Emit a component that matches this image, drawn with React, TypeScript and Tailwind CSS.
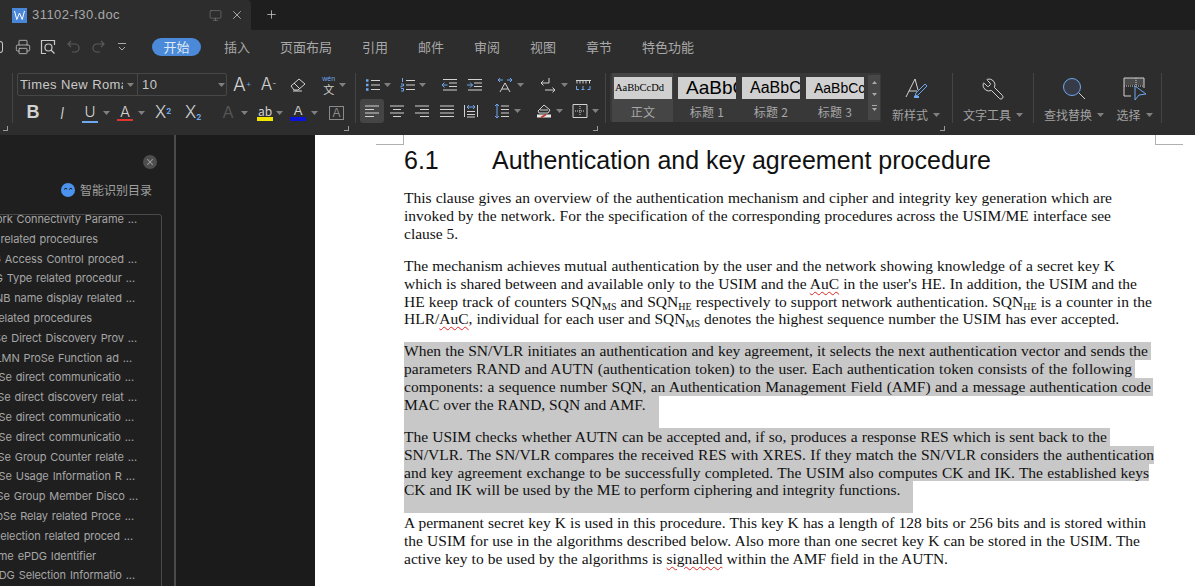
import React from 'react';
import { Monitor, Plus, Printer, Wrench, X } from 'lucide-react';

const cjk = '[font-family:"Noto_Sans_CJK_SC","Noto_Sans",sans-serif]';
const serif = '[font-family:"Liberation_Serif",serif]';
const sans = '[font-family:"Liberation_Sans",sans-serif]';
const thin = '[font-family:Inter,sans-serif] font-light';

type IconProps = { className?: string };

const Caret = ({ className = '' }: IconProps) => (
  <svg width="7" height="4" viewBox="0 0 7 4" className={`shrink-0 ${className}`}>
    <path d="M0 0h7L3.5 4z" fill="#808080" />
  </svg>
);

const Svg = ({ className = '', children }: IconProps & { children: React.ReactNode }) => (
  <svg width="16" height="16" viewBox="0 0 16 16" fill="none" stroke="#d2d2d2" strokeWidth="1" className={`shrink-0 ${className}`}>
    {children}
  </svg>
);

const Bullets = ({ className }: IconProps) => (
  <Svg className={className}>
    <path d="M6 3.5h9M6 8h9M6 12.5h9" />
    <path d="M1 3.5h2.5M1 8h2.5M1 12.5h2.5" stroke="#6ea8ee" strokeWidth="2.5" />
  </Svg>
);
const Numbers = ({ className }: IconProps) => (
  <Svg className={className}>
    <path d="M6 3.5h9M6 8h9M6 12.5h9" />
    <path d="M2.500 1v4M1 7h2.500v2H1v1.500M1 11.500h2.500v2.500H1" stroke="#6ea8ee" />
  </Svg>
);
const Outdent = ({ className }: IconProps) => (
  <Svg className={className}>
    <path d="M2 2.500h14M8 6h8M8 9.500h8M2 13h14" />
    <path d="M6.500 8H1M3.500 5.500 1 8l2.500 2.500" stroke="#6ea8ee" />
  </Svg>
);
const Indent = ({ className }: IconProps) => (
  <Svg className={className}>
    <path d="M2 2.500h14M8 6h8M8 9.500h8M2 13h14" />
    <path d="M1 8h5.500M4 5.500 6.500 8 4 10.500" stroke="#6ea8ee" />
  </Svg>
);
const AsianLayout = ({ className }: IconProps) => (
  <Svg className={className}>
    <path d="M3 15 8 6l5 9M5 12h6" />
    <path d="M1 3h5M3 1 1 3l2 2M15 3h-5M13 1l2 2-2 2" stroke="#6ea8ee" />
  </Svg>
);
const ReturnMark = ({ className }: IconProps) => (
  <Svg className={className}>
    <path d="M9 1v5H1M3.500 3.500 1 6l2.500 2.500M5 13h10M12.500 10.500 15 13l-2.500 2.500" />
  </Svg>
);
const Ruler = ({ className }: IconProps) => (
  <Svg className={className}>
    <path d="M1 3.500h15M2 3.500v3M5 3.500v3M8 3.500v3M11 3.500v3M14.500 3.500v3" />
    <path d="M1.500 9v3.500h2.500M15 9v3.500h-2.500M8 9v3.500M6.500 12.500h3" stroke="#6ea8ee" />
  </Svg>
);
const Align = ({ d, className }: IconProps & { d: string }) => (
  <Svg className={className}>
    <path d={d} />
  </Svg>
);
const Distribute = ({ className }: IconProps) => (
  <Svg className={className}>
    <path d="M1.500 2v12M14.500 2v12M4 8.500h8M4 11.500h8M4 14h8" />
    <path d="M4 4h8M6 2 4 4l2 2M10 2l2 2-2 2" stroke="#6ea8ee" />
  </Svg>
);
const LineSpacing = ({ className }: IconProps) => (
  <Svg className={className}>
    <path d="M7 3h8M7 6.500h8M7 10h8M7 13.500h8" />
    <path d="M3 1v14M1 3l2-2 2 2M1 13l2 2 2-2" stroke="#6ea8ee" />
  </Svg>
);
const FillBucket = ({ className }: IconProps) => (
  <Svg className={className}>
    <path d="M2 8 8 2l6 5-2 3H3z" />
    <path d="M4 7h8" />
    <path d="M1 11.500h14v3H1z" fill="#e8e8e8" stroke="none" />
    <path d="M5 14.500 10 11.500" stroke="#c8322e" strokeWidth="1.500" />
  </Svg>
);
const Borders = ({ className }: IconProps) => (
  <Svg className={className}>
    <path d="M1 1.500h14v13H1z" />
    <path d="M8 3v10M3 8h10" strokeDasharray="1 1" />
  </Svg>
);

const Sep = () => <div className="w-px h-[50px] bg-[#454545] shrink-0" />;

const Launcher = ({ className = '' }: IconProps) => (
  <div className={`absolute top-[60px] w-[5px] h-[5px] border-r border-b border-[#9a9a9a] ${className}`} />
);

const BigTool = ({ w, label, icon }: { w: string; label: string; icon: React.ReactNode }) => (
  <div className={`flex flex-col items-center shrink-0 pt-[10px] ${w}`}>
    <div className="h-[26px] w-[26px] flex items-center justify-center">{icon}</div>
    <div className={`mt-[4px] flex items-center gap-[5px] text-[12px] leading-[18px] text-[#a2a2a2] ${cjk}`}>
      {label}
      <Caret />
    </div>
  </div>
);

const menuItems = ['插入', '页面布局', '引用', '邮件', '审阅', '视图', '章节', '特色功能'];

const styles = [
  { sample: 'AaBbCcDd', cls: `text-[10.5px] pl-[1px] ${serif}`, label: '正文', box: 'ml-[2px] w-[61px] pl-[2px] pr-[1px] bg-[#454545]' },
  { sample: 'AaBbC', cls: `text-[19px] pl-[8px] ${sans}`, label: '标题 1', box: 'ml-[5px] w-[58px]' },
  { sample: 'AaBbC', cls: `text-[16px] pl-[8px] ${sans}`, label: '标题 2', box: 'ml-[6px] w-[58px]' },
  { sample: 'AaBbCc', cls: `text-[14px] pl-[8px] ${sans}`, label: '标题 3', box: 'ml-[6px] w-[58px]' },
];

const outline = [
  { text: 'Network Connectivity Parame ...', m: 'mr-[24px]' },
  { text: 'Network related procedures', m: 'mr-[63px]' },
  { text: 'ePDG Access Control proced ...', m: 'mr-[24px]' },
  { text: 'ePDG Type related procedur ...', m: 'mr-[26px]' },
  { text: 'eNB name display related  ...', m: 'mr-[26px]' },
  { text: 'Network related procedures', m: 'mr-[69px]' },
  { text: 'ProSe Direct Discovery Prov ...', m: 'mr-[24px]' },
  { text: 'HPLMN ProSe Function ad ...', m: 'mr-[29px]' },
  { text: 'ProSe direct communicatio ...', m: 'mr-[27px]' },
  { text: 'ProSe direct discovery relat ...', m: 'mr-[24px]' },
  { text: 'ProSe direct communicatio ...', m: 'mr-[27px]' },
  { text: 'ProSe direct communicatio ...', m: 'mr-[27px]' },
  { text: 'ProSe Group Counter relate ...', m: 'mr-[24px]' },
  { text: 'ProSe Usage Information R ...', m: 'mr-[26px]' },
  { text: 'ProSe Group Member Disco ...', m: 'mr-[23px]' },
  { text: 'ProSe Relay related Proce ...', m: 'mr-[27px]' },
  { text: 'ePDG Selection related proced ...', m: 'mr-[28px]' },
  { text: 'Home ePDG Identifier', m: 'mr-[65px]' },
  { text: 'ePDG Selection Informatio ...', m: 'mr-[26px]' },
];

const Line = ({ w, h = 'h-[18px]', bg = '', children }: { w?: string; h?: string; bg?: string; children: React.ReactNode }) => (
  <div className={`${h} ${bg}`}>
    <div className={`${w ?? ''} ${w ? 'text-justify [text-align-last:justify]' : ''} leading-[18px]`}>{children}</div>
  </div>
);

const Sub = ({ children }: { children: React.ReactNode }) => <sub className="text-[10px]">{children}</sub>;
const Wavy = ({ children }: { children: React.ReactNode }) => (
  <span className="underline decoration-wavy decoration-[#e02424] decoration-1 underline-offset-2">{children}</span>
);

export default function App() {
  return (
    <div className="w-[1195px] h-[586px] overflow-hidden flex flex-col bg-[#1d1d1d]">
      {/* tab strip */}
      <div className="h-[30px] flex shrink-0 bg-[#1e1e1e]">
        <div className="w-[251px] flex items-center bg-[#2d2d2d] rounded-tr-[4px] pl-[12px]">
          <div className="w-[15px] h-[15px] bg-[#4a86d8] flex items-center justify-center">
            <svg width="11" height="9" viewBox="0 0 11 9" fill="none" stroke="#fff" strokeWidth="1">
              <path d="M.5 0 2.800 8.500 5.500 2l2.700 6.500L10.500 0" />
            </svg>
          </div>
          <span className={`ml-[5px] text-[13px] tracking-[0.45px] text-[#a8a8a8] ${sans}`}>31102-f30.doc</span>
          <Monitor size={13} strokeWidth={1} className="ml-[89px] text-[#8a8a8a]" />
          <X size={14} strokeWidth={1.200} className="ml-[8px] text-[#dcdcdc]" />
        </div>
        <Plus size={13} strokeWidth={1.500} className="ml-[14px] mt-[8px] text-[#c4c4c4]" />
      </div>

      {/* menu row */}
      <div className="h-[36px] pb-[2px] flex items-center shrink-0 bg-[#2d2d2d]">
        <div className="w-[3px] h-[12px] border border-l-0 border-[#c8c8c8] rounded-r-full" />
        <Printer size={16} strokeWidth={1.200} className="ml-[12px] text-[#c8c8c8]" />
        <svg width="16" height="16" viewBox="0 0 16 16" fill="none" stroke="#c8c8c8" strokeWidth="1.200" className="ml-[9px]">
          <path d="M6 14.500H1.500v-13h13V6" />
          <circle cx="8.500" cy="8.500" r="3.500" />
          <path d="m11 11 3.500 3.500" />
        </svg>
        <svg width="14" height="14" viewBox="0 0 14 14" fill="none" stroke="#5a5a5a" strokeWidth="1.200" className="ml-[11px]">
          <path d="M4 1 1 4l3 3M1 4h7a4 4 0 0 1 0 8H5" />
        </svg>
        <svg width="14" height="14" viewBox="0 0 14 14" fill="none" stroke="#5a5a5a" strokeWidth="1.200" className="ml-[10px]">
          <path d="m10 1 3 3-3 3M13 4H6a4 4 0 0 0 0 8h3" />
        </svg>
        <svg width="8" height="9" viewBox="0 0 8 9" fill="none" stroke="#a8a8a8" className="ml-[13px]">
          <path d="M0 .500h8M1 4l3 3 3-3" />
        </svg>
        <div className={`ml-[26px] w-[49px] h-[18px] rounded-full bg-[#4a8ad8] text-center text-[13px] leading-[18px] text-[#dfe9f7] ${cjk}`}>开始</div>
        <div className={`ml-[23px] flex gap-[30px] text-[13px] text-[#a8a8a8] ${cjk}`}>
          {menuItems.map((m) => (
            <span key={m}>{m}</span>
          ))}
        </div>
      </div>

      {/* ribbon */}
      <div className="relative h-[69px] flex shrink-0 items-start pt-[7px] bg-[#2d2d2d]">
        <div className="ml-[12px]"><Sep /></div>
        <div className="w-[342px] shrink-0 pl-[4px]">
          <div className="flex items-center h-[23px]">
            <div className={`flex items-center w-[210px] h-[23px] border border-[#474747] rounded-[2px] text-[13px] text-[#c8c8c8] ${sans}`}>
              <div className="w-[120px] h-full flex items-center border-r border-[#474747] pl-[2px]">
                <span className="w-[103px] overflow-hidden whitespace-nowrap tracking-[0.4px]">Times New Roman</span>
                <Caret className="ml-[4px]" />
              </div>
              <span className="pl-[4px] w-[80px] tracking-[0.5px]">10</span>
              <Caret />
            </div>
            <span className={`ml-[6px] text-[19px] leading-[23px] text-[#d2d2d2] ${thin}`}>A<sup className="text-[9px] text-[#6ea8ee]">+</sup></span>
            <span className={`ml-[9px] text-[17px] leading-[23px] text-[#d2d2d2] ${thin}`}>A<sup className="text-[9px] text-[#d2d2d2]">-</sup></span>
            <svg width="16" height="14" viewBox="0 0 16 14" fill="none" stroke="#d2d2d2" className="ml-[14px] shrink-0">
              <path d="M1 8 9 1l6 5-7 6H4zM4 5l6 6M3 13h9" />
            </svg>
            <div className={`ml-[15px] flex flex-col items-center w-[15px] ${cjk}`}>
              <span className={`text-[7px] h-[8px] leading-[8px] text-[#6ea8ee] ${sans}`}>wén</span>
              <span className="text-[11px] h-[12px] leading-[12px] text-[#d2d2d2]">文</span>
            </div>
            <Caret className="ml-[3px]" />
          </div>
          <div className={`flex items-center h-[27px] mt-[3px] text-[#d2d2d2] ${sans}`}>
            <span className="ml-[9px] w-[14px] text-[18px] font-bold text-center">B</span>
            <span className={`ml-[18px] w-[8px] text-[16px] italic text-center ${thin}`}>I</span>
            <span className={`ml-[16px] w-[16px] text-[15px] text-center leading-[18px] border-b-2 border-[#6ea8ee] ${thin}`}>U</span>
            <Caret className="ml-[5px]" />
            <span className={`ml-[7px] w-[16px] text-[15px] text-center leading-[14px] border-b-2 border-[#e0352e] ${thin}`}>A</span>
            <Caret className="ml-[5px]" />
            <span className={`ml-[10px] w-[17px] text-[17px] ${thin}`}>X<sup className="text-[8px] text-[#6ea8ee] font-bold">2</sup></span>
            <span className={`ml-[13px] w-[17px] text-[17px] ${thin}`}>X<sub className="text-[8px] text-[#6ea8ee] font-bold">2</sub></span>
            <span className="ml-[18px] w-[16px] text-[16px] text-center text-[#555]">A</span>
            <Caret className="ml-[5px]" />
            <span className={`ml-[9px] w-[16px] text-[12px] text-center leading-[13px] border-b-[4px] border-[#f2e600] ${cjk}`}>ab</span>
            <Caret className="ml-[3px]" />
            <span className="ml-[7px] w-[16px] text-[13px] text-center leading-[13px] border-b-[4px] border-[#0b14d8]">A</span>
            <Caret className="ml-[5px]" />
            <span className="ml-[11px] w-[15px] h-[14px] border border-[#8a8a8a] text-[12px] leading-[12px] text-center text-[#8a8a8a]">A</span>
          </div>
        </div>
        <Sep />
        <div className="w-[249px] shrink-0 pl-[4px]">
          <div className="flex items-center h-[23px]">
            <Bullets className="ml-[5px]" />
            <Caret className="ml-[3px]" />
            <Numbers className="ml-[9px]" />
            <Caret className="ml-[3px]" />
            <Outdent className="ml-[15px]" />
            <Indent className="ml-[9px]" />
            <AsianLayout className="ml-[15px]" />
            <Caret className="ml-[4px]" />
            <ReturnMark className="ml-[16px]" />
            <Caret className="ml-[5px]" />
            <Ruler className="ml-[7px]" />
          </div>
          <div className="flex items-center h-[24px] mt-[3px]">
            <div className="w-[24px] h-[24px] rounded-[3px] bg-[#454545] flex items-center justify-center">
              <Align d="M1 3h14M1 6.500h9M1 10h14M1 13.500h9" />
            </div>
            <Align className="ml-[5px]" d="M1 3h14M4 6.500h8M1 10h14M4 13.500h8" />
            <Align className="ml-[9px]" d="M1 3h14M6 6.500h9M1 10h14M6 13.500h9" />
            <Align className="ml-[9px]" d="M1 3h14M1 6.500h14M1 10h14M1 13.500h14" />
            <Distribute className="ml-[8px]" />
            <LineSpacing className="ml-[15px]" />
            <Caret className="ml-[4px]" />
            <FillBucket className="ml-[15px]" />
            <Caret className="ml-[4px]" />
            <Borders className="ml-[9px]" />
            <Caret className="ml-[4px]" />
          </div>
        </div>
        <Sep />
        <div className="ml-[4px] w-[271px] h-[49px] shrink-0 flex rounded-[2px] bg-[#383838]">
          {styles.map((s) => (
            <div key={s.label} className={`shrink-0 pt-[4px] ${s.box}`}>
              <div className={`h-[22px] overflow-hidden whitespace-nowrap bg-[#d0d0d0] text-black leading-[22px] ${s.cls}`}>{s.sample}</div>
              <div className={`mt-[4px] text-center text-[12px] leading-[18px] text-[#a8a8a8] tracking-[0.3px] ${cjk}`}>{s.label}</div>
            </div>
          ))}
          <div className="ml-[4px] w-[12px] flex flex-col items-center bg-[#474747] my-[2px] pt-[6px] gap-[9px]">
            <svg width="5" height="3" viewBox="0 0 5 3"><path d="M0 3h5L2.500 0z" fill="#aaa" /></svg>
            <svg width="5" height="3" viewBox="0 0 5 3"><path d="M0 0h5L2.500 3z" fill="#aaa" /></svg>
            <svg width="5" height="6" viewBox="0 0 5 6"><path d="M0 0h5v1H0zM0 3h5L2.500 6z" fill="#aaa" /></svg>
          </div>
        </div>
        <div className="-mt-[7px] flex">
          <BigTool
            w="w-[72px] -ml-px"
            label="新样式"
            icon={
              <svg width="24" height="24" viewBox="0 0 24 24" fill="none" stroke="#d2d2d2">
                <path d="M2 20 11 2l3 11M5 14h8" />
                <path d="m12 16 9-9 2 2-9 9-3 1z" stroke="#6ea8ee" />
                <path d="M10 20h5" stroke="#6ea8ee" strokeWidth="2" />
              </svg>
            }
          />
          <div className="pt-[7px]"><Sep /></div>
          <BigTool w="w-[80px]" label="文字工具" icon={<Wrench size={24} strokeWidth={1} className="-scale-x-100 text-[#d2d2d2]" />} />
          <div className="pt-[7px]"><Sep /></div>
          <BigTool
            w="w-[80px]"
            label="查找替换"
            icon={
              <svg width="24" height="24" viewBox="0 0 24 24" fill="#363b47">
                <circle cx="10" cy="10" r="8.500" stroke="#6ea8ee" />
                <path d="m17 16 6 6" stroke="#d2d2d2" />
              </svg>
            }
          />
          <BigTool
            w="w-[47px] -ml-[3px]"
            label="选择"
            icon={
              <svg width="24" height="24" viewBox="0 0 24 24" fill="none" stroke="#d2d2d2">
                <path d="M1 1h20v7H1z" fill="#4a4a4a" stroke="none" />
                <path d="M8 19H1V1h20v10" />
                <path d="M1 9h20M13 1v8" strokeDasharray="1 1" />
                <path d="m12 9 0 14 4-5 7-1z" fill="#2d2d2d" stroke="#6ea8ee" />
              </svg>
            }
          />
          <div className="pt-[7px] ml-[3px]"><Sep /></div>
        </div>
        <Launcher className="left-[3px]" />
        <Launcher className="left-[344px]" />
        <Launcher className="left-[593px]" />
        <Launcher className="left-[940px]" />
      </div>

      {/* body */}
      <div className="flex-1 flex min-h-0">
        <div className="w-[176px] shrink-0 border-r-2 border-[#4a4a4a] bg-[#1f1f1f] overflow-hidden">
          <div className="flex justify-end pr-[17px] pt-[20px]">
            <div className="w-[14px] h-[14px] rounded-full bg-[#4e4e4e] flex items-center justify-center">
              <X size={10} strokeWidth={2.500} className="text-[#a0a0a0]" />
            </div>
          </div>
          <div className={`flex items-center justify-end pr-[22px] mt-[12px] h-[18px] text-[12px] text-[#a0a0a0] ${cjk}`}>
            <svg width="14" height="14" viewBox="0 0 14 14" className="mr-[5px]">
              <circle cx="7" cy="7" r="7" fill="#4a94f0" />
              <path d="M3 6.500 5 5l1 1.500M8 6.500 10 5l1 1.500" fill="none" stroke="#1f1f1f" />
            </svg>
            智能识别目录
          </div>
          <div className="mt-[15px] -ml-[4px] w-[166px] h-[400px] border border-[#4a4a4a] rounded-[3px] overflow-hidden">
            <div className="-mt-[5px] text-[11px] tracking-[-0.1px] [word-spacing:1px] text-[#a6a6a6] [font-family:Inter,sans-serif]">
              {outline.map((o, i) => (
                <div key={i} className="h-[19.8px] leading-[19.8px] flex justify-end whitespace-nowrap">
                  <span className={`shrink-0 ${o.m}`}>{o.text}</span>
                </div>
              ))}
            </div>
          </div>
        </div>
        <div className="w-[139px] shrink-0 bg-[#1b1b1b]" />

        {/* page */}
        <div className={`relative flex-1 bg-white pl-[89px] pt-[11px] text-[15.5px] text-[#111] ${serif}`}>
          <div className="absolute left-[61px] top-0 w-[28px] h-[10px] border-r border-b border-[#b0b0b0]" />
          <div className="absolute left-[840px] top-0 w-[28px] h-[10px] border-l border-b border-[#b0b0b0]" />
          <div className={`flex h-[29px] items-center text-[25px] text-[#111] ${sans}`}>
            <span className="w-[88px]">6.1</span>
            <span>Authentication and key agreement procedure</span>
          </div>
          <div className="mt-[14px] w-[756px]">
            <Line w="w-[708px]">This clause gives an overview of the authentication mechanism and cipher and integrity key generation which are</Line>
            <Line w="w-[707px]">invoked by the network. For the specification of the corresponding procedures across the USIM/ME interface see</Line>
            <Line>clause 5.</Line>
          </div>
          <div className="mt-[14px] w-[756px]">
            <Line w="w-[711px]">The mechanism achieves mutual authentication by the user and the network showing knowledge of a secret key K</Line>
            <Line w="w-[733px]">which is shared between and available only to the USIM and the <Wavy>AuC</Wavy> in the user's HE. In addition, the USIM and the</Line>
            <Line w="w-[748px]" h="h-[17px]">HE keep track of counters SQN<Sub>MS</Sub> and SQN<Sub>HE</Sub> respectively to support network authentication. SQN<Sub>HE</Sub> is a counter in the</Line>
            <Line w="w-[715px]">HLR/<Wavy>AuC</Wavy>, individual for each user and SQN<Sub>MS</Sub> denotes the highest sequence number the USIM has ever accepted.</Line>
          </div>
          <div className="mt-[14px] w-[760px]">
            <Line w="w-[744px]" bg="bg-[#c8c8c8] w-[747px]">When the SN/VLR initiates an authentication and key agreement, it selects the next authentication vector and sends the</Line>
            <Line w="w-[728px]" bg="bg-[#c8c8c8] w-[731px]">parameters RAND and AUTN (authentication token) to the user. Each authentication token consists of the following</Line>
            <Line w="w-[747px]" bg="bg-[#c8c8c8] w-[749px]">components: a sequence number SQN, an Authentication Management Field (AMF) and a message authentication code</Line>
            <Line h="h-[32px]" bg="bg-[#c8c8c8] w-[255px]">MAC over the RAND, SQN and AMF.</Line>
          </div>
          <div className="w-[760px]">
            <Line w="w-[703px]" bg="bg-[#c8c8c8] w-[706px]">The USIM checks whether AUTN can be accepted and, if so, produces a response RES which is sent back to the</Line>
            <Line w="w-[750px]" bg="bg-[#c8c8c8] w-[750px]">SN/VLR. The SN/VLR compares the received RES with XRES. If they match the SN/VLR considers the authentication</Line>
            <Line w="w-[745px]" h="h-[17px]" bg="bg-[#c8c8c8] w-[745px]">and key agreement exchange to be successfully completed. The USIM also computes CK and IK. The established keys</Line>
            <Line h="h-[32px]" bg="bg-[#c8c8c8] w-[509px]">CK and IK will be used by the ME to perform ciphering and integrity functions.</Line>
          </div>
          <div className="mt-[1px] w-[756px]">
            <Line w="w-[742px]">A permanent secret key K is used in this procedure. This key K has a length of 128 bits or 256 bits and is stored within</Line>
            <Line w="w-[736px]">the USIM for use in the algorithms described below. Also more than one secret key K can be stored in the USIM. The</Line>
            <Line w="w-[544px]">active key to be used by the algorithms is <Wavy>signalled</Wavy> within the AMF field in the AUTN.</Line>
          </div>
        </div>
      </div>
    </div>
  );
}
